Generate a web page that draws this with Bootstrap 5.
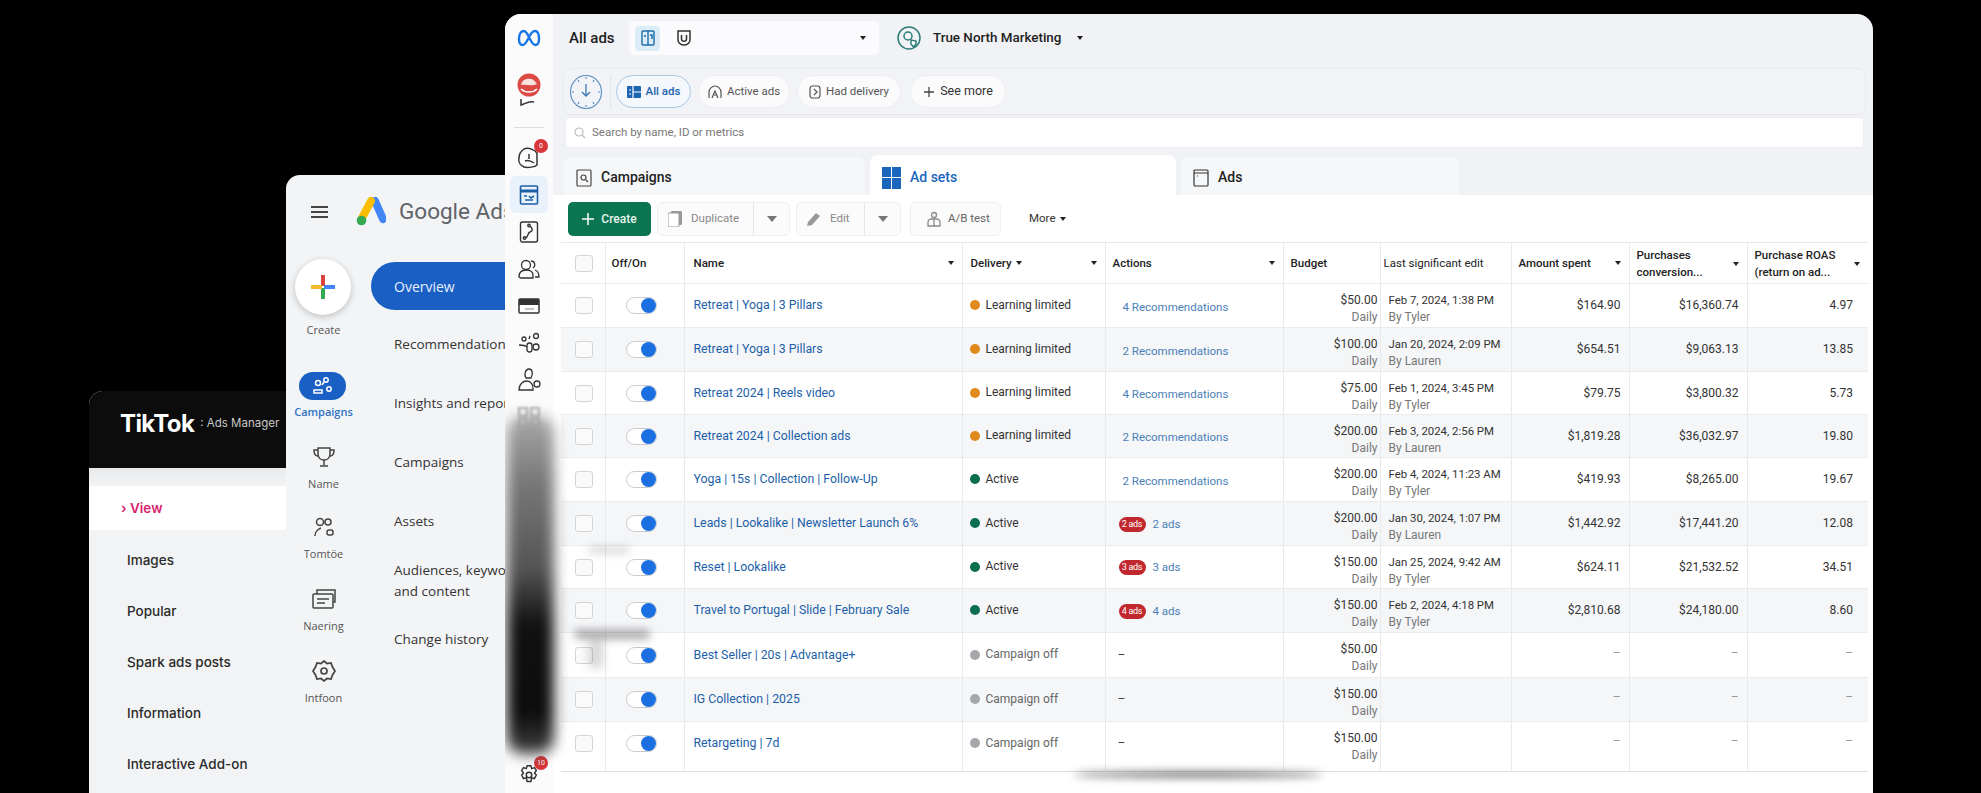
<!DOCTYPE html>
<html lang="en">
<head>
  <meta charset="UTF-8" />
  <title>All ads</title>
  <link href="https://cdn.jsdelivr.net/npm/bootstrap@5.3.0/dist/css/bootstrap.min.css" rel="stylesheet"/>
  <style>
    html, body { height: 100%; }
    body { background: #000; overflow: hidden; font-family: Roboto, "Liberation Sans", sans-serif; }
    .desk { position: relative; width: 1981px; height: 793px; overflow: hidden; }

    /* desktop windows */
    .win-tt, .win-gg, .win-mt { position: absolute; bottom: 0; overflow: hidden; }
    .win-tt { left: 89px; top: 391px; width: 300px; background: #f2f3f4; border-radius: 14px 0 0 0; font-family: Inter, sans-serif; }
    .win-gg { left: 286px; top: 175px; width: 320px; background: #f3f4f6; border-radius: 14px 0 0 0; font-family: "Open Sans", sans-serif; }
    .win-mt { left: 505px; top: 14px; width: 1368px; background: #f1f2f6; border-radius: 16px 16px 0 0; display: flex; }

    /* tiktok */
    .tt-head { height: 77px; background: #0c0c0c; color: #fff; padding: 0 31px 11px; }
    .tt-logo { font-size: 24px; font-weight: 700; letter-spacing: -.6px; }
    .tt-sub { font-size: 11.500px; color: #c9c9c9; margin-left: 6px; }
    .tt-nav { padding-top: 18px; background: linear-gradient(#e8e9ea, #f2f3f4 18px); }
    .tt-item { height: 51px; padding-left: 38px; font-size: 13.500px; font-weight: 500; color: #2a2a2a; }
    .tt-item.on { height: 44px; margin-bottom: 5px; background: #fff; color: #d81e6c; font-weight: 600; padding-left: 32px; }

    /* google */
    .gg-rail { width: 75px; }
    .gg-top { height: 73px; padding-left: 25px; gap: 20px; }
    .gg-bars { width: 17px; height: 12px; border-top: 2px solid #444; border-bottom: 2px solid #444; position: relative; }
    .gg-bars::after { content: ""; position: absolute; left: 0; right: 0; top: 3px; height: 2px; background: #444; }
    .gg-logo { margin-left: 8px; }
    .gg-name { font-size: 22.500px; color: #5f6368; white-space: nowrap; margin-left: -7px; font-family: Roboto, sans-serif; }
    .gg-plus { width: 56px; height: 56px; border-radius: 50%; background: #fff; box-shadow: 0 2px 7px rgba(0,0,0,.22); margin: 11px 0 0 9px; }
    .gg-lab { font-size: 11px; color: #555; text-align: center; width: 75px; line-height: 14px; white-space: nowrap; margin-top: 5px; }
    .gg-lab-create { margin-top: 8px; }
    .gg-lab-camp { color: #2f72c4; margin-top: 5px; font-weight: 600; }
    .gg-pill { width: 47px; height: 28px; border-radius: 14px; background: #1a5fc4; margin: 35px 0 0 13px; }
    .gg-ico { height: 30px; width: 75px; margin-top: 23px; }
    .gg-ico-tight { margin-top: 21px; }
    .gg-cols { position: relative; }
    .gg-over { margin-left: 10px; height: 48px; width: 260px; border-radius: 24px 0 0 24px; background: #1a5fc4; color: #e8f0fe; font-size: 14px; padding-left: 23px; margin-top: 14px; }
    .gg-link { margin: 38px 0 0 33px; font-size: 13.500px; color: #333; white-space: nowrap; line-height: 21px; font-weight: 500; }
    .gg-link-a { margin-top: 24px; }
    .gg-link-b { margin-top: 28px; }
    .gg-link-c { margin-top: 27px; }

    /* meta side */
    .mt-side { width: 48px; background: #fbfbfc; flex: none; }
    .mt-slot { height: 37px; flex: none; position: relative; }
    .mt-slot.on { background: #e9f1fa; border-radius: 6px; width: 38px; margin-left: 5px; }
    .mt-slot-logo { margin-top: 5px; }
    .mt-slot-user { margin-top: 14px; height: 45px; }
    .mt-slot-gear { margin-top: auto; }
    .mt-slot-dim svg { filter: blur(1px); }
    .mt-rule { width: 30px; height: 1px; background: #dcdcdc; margin: 12px auto 11px; }
    .mt-dot { position: absolute; top: 0; right: 5px; width: 14px; height: 14px; border-radius: 50%; background: #d9363a; color: #fff; font-size: 7px; line-height: 14px; text-align: center; }
    .mt-main { flex: 1; min-width: 0; padding-left: 8px; }

    .mt-top { height: 54px; padding: 0 0 6px 8px; }
    .mt-title { font-size: 15px; font-weight: 500; color: #1c1c1c; width: 60px; }
    .mt-pick { width: 250px; height: 34px; background: #fbfbfd; border-radius: 5px; padding: 0 13px 0 6px; }
    .mt-pick-a { width: 25px; height: 25px; background: #dcecf6; border-radius: 4px; }
    .mt-acct { margin-left: 18px; font-size: 13.400px; font-weight: 500; color: #222; }
    .caret-dn { width: 0; height: 0; border-left: 3.500px solid transparent; border-right: 3.500px solid transparent; border-top: 4.500px solid #222; flex: none; }
    .caret-gr { border-left-width: 5px; border-right-width: 5px; border-top: 6px solid #777; }

    .mt-strip { height: 47px; margin: 0 7px 0 2px; background: #f1f3f7; border: 1px solid #e8eaf0; border-radius: 8px; padding: 0 6px; gap: 7px; }
    .mt-clock { width: 32px; height: 34px; flex: none; }
    .mt-sep { width: 1px; height: 34px; background: #e2e4ea; margin: 0 -2px 0 1px; }
    .mt-chip { height: 33px; border-radius: 17px; background: #fbfbfc; border: 1px solid #eceef2; font-size: 11.500px; color: #555; gap: 5px; white-space: nowrap; justify-content: center; }
    .chip-all { width: 75px; border-color: #a9c8e4; color: #1c64b0; background: #f4f8fc; font-weight: 500; }
    .chip-act { width: 92px; }
    .chip-had { width: 104px; }
    .chip-more { width: 96px; font-size: 12.500px; color: #333; margin-left: 2px; }
    .mt-find { height: 31px; margin: 2px 9px 0 4px; background: #fff; border-radius: 5px; border: 1px solid #eceef1; padding-left: 8px; gap: 6px; font-size: 11.500px; color: #777; }
    .mt-tabs { height: 38px; margin: 9px 0 0 3px; gap: 5px; }
    .mt-tab { height: 38px; background: #f6f7f9; border-radius: 8px 8px 0 0; font-size: 14px; font-weight: 500; color: #222; padding: 3px 0 0 12px; gap: 9px; }
    .tab-camp { width: 301px; }
    .tab-sets { width: 306px; background: #fff; color: #1a66bd; height: 40px; margin-top: -2px; padding: 5px 0 0 12px; }
    .tab-ads { width: 278px; }

    .mt-body { background: #fff; margin-left: -8px; padding-left: 7px; position: relative; }
    .mt-tools { height: 47px; padding: 7px 0 6px 8px; gap: 6px; }
    .mt-btn { height: 34px; background: #fbfbfb; border: 1px solid #efefef; border-radius: 5px; font-size: 11.500px; color: #888; gap: 9px; white-space: nowrap; padding-left: 10px; }
    .mt-create { width: 83px; background: #0a7550; border: 0; color: #e6f4ee; font-size: 12px; font-weight: 500; justify-content: center; gap: 7px; padding: 0; }
    .btn-dup { width: 133px; }
    .btn-edit { width: 105px; }
    .btn-ab { width: 91px; color: #666; padding-left: 16px; gap: 7px; margin-left: 3px; }
    .tool-more { font-size: 11.500px; color: #333; margin-left: 22px; }
    .mt-split { border-left: 1px solid #e5e5e5; height: 100%; width: 36px; flex: none; }

    .ad-grid { table-layout: fixed; width: 1307px; margin: 0 0 0 1px; --bs-table-bg: transparent; border-top: 1px solid #e8e8ea; border-bottom: 1px solid #dedfe2; font-size: 12px; color: #333; }
    .ad-grid > :not(caption) > * > * { padding: 0; border-bottom: 1px solid #ebecee; border-right: 1px solid #e9eaec; vertical-align: middle; box-shadow: none; }
    .ad-grid > tbody > tr > td.cell-top { vertical-align: top; padding-top: 8px; }
    .ad-grid th { height: 41px; font-weight: 500; font-size: 11.500px; color: #222; line-height: 17px; background: #fff; }
    .ad-grid td { line-height: 17px; }
    .ad-grid tbody tr:last-child td { border-bottom: 0; padding-bottom: 6px; }
    .ad-grid tbody tr:nth-child(even) td { background: #f5f6f8; }
    .ad-grid tr > *:last-child { border-right: 0; }
    .col-a { width: 44px; } .col-b { width: 79px; } .col-c { width: 278px; } .col-d { width: 143px; } .col-e { width: 178px; }
    .col-f { width: 97px; } .col-g { width: 131px; } .col-h { width: 118px; } .col-i { width: 118px; } .col-j { width: 121px; }
    .hd { padding: 0 8px 0 7px; }
    .hd-off { padding-left: 6px; }
    .hd-name { padding-left: 9px; }
    .hd-del { padding-left: 8px; }
    .hd-edit { padding-left: 3px; white-space: nowrap; font-weight: 400; }
    .hd-two { padding-top: 2px; white-space: nowrap; }
    .box { width: 18px; height: 17px; border: 1px solid #d4d5d8; border-radius: 3px; background: #fafafa; margin-left: 14px; }
    .tog { width: 31px; height: 17px; border-radius: 9px; border: 1px solid #c9cace; background: #fff; margin-left: 20px; position: relative; }
    .tog::after { content: ""; position: absolute; right: 0; top: 0; width: 15px; height: 15px; border-radius: 50%; background: #1c6fe0; }
    .ad-name { padding-left: 9px; color: #1c5fa8; font-size: 12.300px; white-space: nowrap; }
    .st { padding-left: 7px; gap: 6px; white-space: nowrap; margin-top: -1px; }
    .st-dot { width: 10px; height: 10px; border-radius: 50%; flex: none; }
    .act { padding-left: 17px; color: #4a80b8; font-size: 11.500px; margin-top: 3px; white-space: nowrap; }
    .act-ads { padding-left: 13px; gap: 7px; color: #4a80b8; font-size: 11.500px; margin-top: 1px; }
    .ads-pill { width: 27px; height: 15px; border-radius: 8px; background: #c0282d; color: #fff; font-size: 9px; line-height: 15px; text-align: center; white-space: nowrap; letter-spacing: -.3px; }
    .act-none { padding-left: 12px; color: #444; }
    .sub { color: #777; font-size: 12px; }
    .bud { text-align: right; padding-right: 2px; }
    .edt { padding-left: 8px; white-space: nowrap; font-size: 11.400px; }
    .num { text-align: right; padding-right: 8px; }
    .num-last { padding-right: 15px; }
    .dash { color: #999; margin-top: -4px; }

    /* blur marks left on the picture */
    .smear { position: absolute; pointer-events: none; }
    .smear-side { left: 2px; top: 402px; width: 47px; height: 338px; filter: blur(7px); border-radius: 16px; background: linear-gradient(#a8a8a8, #777 20%, #555 45%, #111 62%, #0d0d0d 88%, #444); }
    .smear-a { left: 22px; top: 436px; width: 74px; height: 7px; background: rgba(0,0,0,.45); filter: blur(5px); }
    .smear-b { left: 36px; top: 445px; width: 14px; height: 28px; background: rgba(0,0,0,.16); filter: blur(5px); }
    .smear-d { left: 36px; top: 352px; width: 40px; height: 6px; background: rgba(0,0,0,.18); filter: blur(4px); }
    .smear-c { left: 520px; top: 577px; width: 250px; height: 5px; border-radius: 50%; background: rgba(0,0,0,.7); filter: blur(4px); }
  </style>
</head>
<body>
<div class="desk">

  <!-- tiktok window -->
  <div class="win-tt">
    <div class="tt-head d-flex align-items-center">
      <span class="tt-logo">TikTok</span><span class="tt-sub">: Ads Manager</span>
    </div>
    <div class="tt-nav">
      <div class="tt-item on d-flex align-items-center">&rsaquo;&nbsp;View</div>
      <div class="tt-item d-flex align-items-center">Images</div>
      <div class="tt-item d-flex align-items-center">Popular</div>
      <div class="tt-item d-flex align-items-center">Spark ads posts</div>
      <div class="tt-item d-flex align-items-center">Information</div>
      <div class="tt-item d-flex align-items-center">Interactive Add-on</div>
    </div>
  </div>

  <!-- google ads window -->
  <div class="win-gg">
    <div class="gg-top d-flex align-items-center">
      <div class="gg-bars"></div>
      <svg class="gg-logo" width="30" height="30" viewBox="0 0 30 30"><path d="M19 4 L27 22" stroke="#4285f4" stroke-width="8" stroke-linecap="round"/><path d="M15 4 L5 23" stroke="#fbbc04" stroke-width="8" stroke-linecap="round"/><circle cx="5.5" cy="23.500" r="4.800" fill="#34a853"/></svg>
      <span class="gg-name">Google Ads</span>
    </div>
    <div class="d-flex">
      <div class="gg-rail">
        <div class="gg-plus d-flex align-items-center justify-content-center">
          <svg width="26" height="26" viewBox="0 0 26 26"><path d="M13 1v11" stroke="#d8443a" stroke-width="4"/><path d="M13 14v11" stroke="#34a853" stroke-width="4"/><path d="M1 13h11" stroke="#f5b92e" stroke-width="4"/><path d="M14 13h11" stroke="#4285f4" stroke-width="4"/></svg>
        </div>
        <div class="gg-lab gg-lab-create">Create</div>
        <div class="gg-pill d-flex align-items-center justify-content-center">
          <svg width="22" height="18" viewBox="0 0 22 18" fill="none" stroke="#fff" stroke-width="1.500"><circle cx="6" cy="6" r="2.500"/><circle cx="14" cy="3" r="2.200"/><circle cx="17" cy="12" r="2.200"/><path d="M2 16v-3h8v3z"/><path d="M10 8l2-3"/></svg>
        </div>
        <div class="gg-lab gg-lab-camp">Campaigns</div>
        <div class="gg-ico d-flex align-items-center justify-content-center">
          <svg width="24" height="24" viewBox="0 0 24 24" fill="none" stroke="#444" stroke-width="1.500"><path d="M6 3h12v6c0 4-3 6-6 6s-6-2-6-6z"/><path d="M6 5H2c0 4 2 6 4 6M18 5h4c0 4-2 6-4 6M12 15v5M8 21h8"/></svg>
        </div>
        <div class="gg-lab">Name</div>
        <div class="gg-ico gg-ico-tight d-flex align-items-center justify-content-center">
          <svg width="24" height="24" viewBox="0 0 24 24" fill="none" stroke="#444" stroke-width="1.500"><circle cx="8" cy="7" r="3.500"/><circle cx="16" cy="7" r="3"/><rect x="15" y="15" width="6" height="5" rx="2"/><path d="M3 21c0-4 3-7 6-8"/></svg>
        </div>
        <div class="gg-lab">Tomtöe</div>
        <div class="gg-ico d-flex align-items-center justify-content-center">
          <svg width="26" height="24" viewBox="0 0 26 24" fill="none" stroke="#444" stroke-width="1.500"><rect x="2" y="7" width="20" height="14" rx="1"/><path d="M6 7V3h18v12h-2M6 12h12M6 16h8"/></svg>
        </div>
        <div class="gg-lab">Naering</div>
        <div class="gg-ico d-flex align-items-center justify-content-center">
          <svg width="24" height="24" viewBox="0 0 24 24" fill="none" stroke="#444" stroke-width="1.700"><path d="M12 2l3 2.500 4-.5 1.500 4L23 12l-2.500 4-1.500 4-4-.5L12 22l-3-2.500-4 .5-1.500-4L1 12l2.500-4L5 4l4 .5z"/><circle cx="12" cy="12" r="3"/></svg>
        </div>
        <div class="gg-lab">Intfoon</div>
      </div>
      <div class="gg-cols flex-grow-1">
        <div class="gg-over d-flex align-items-center">Overview</div>
        <div class="gg-link gg-link-a">Recommendations</div>
        <div class="gg-link">Insights and reports</div>
        <div class="gg-link">Campaigns</div>
        <div class="gg-link">Assets</div>
        <div class="gg-link gg-link-b">Audiences, keywords<br>and content</div>
        <div class="gg-link gg-link-c">Change history</div>
      </div>
    </div>
  </div>

  <!-- meta ads manager window -->
  <div class="win-mt">
    <div class="mt-side d-flex flex-column align-items-stretch">
      <div class="mt-slot mt-slot-logo d-flex justify-content-center align-items-center">
        <svg width="24" height="18" viewBox="0 0 24 18" fill="none" stroke="#1877e8" stroke-width="2.400"><path d="M7 2C3.500 2 2 6 2 10c0 3 1 6 3.500 6 3 0 5-5 6.500-8 2-4 3.500-6 6-6 3 0 4 4 4 8 0 3-1 6-3.500 6-3 0-5-5-6.500-8-1.500-3-3-6-5-6z"/></svg>
      </div>
      <div class="mt-slot mt-slot-user d-flex justify-content-center">
        <svg width="24" height="40" viewBox="0 0 24 40"><circle cx="12" cy="15" r="11.500" fill="#dd4a45"/><path d="M4 15c1-5 5-7 10-6 2 0 4 2 6 5l-3 1c-4 1-9-1-13 0z" fill="#f8e3df"/><path d="M4 19c4 4 12 4 16 0" stroke="#fff" stroke-width="1.500" fill="none"/><path d="M4 29v6c4-1 7-4 13-3" stroke="#333" stroke-width="1.500" fill="none"/></svg>
      </div>
      <div class="mt-rule"></div>
      <div class="mt-slot d-flex justify-content-center align-items-center">
        <svg width="24" height="24" viewBox="0 0 24 24" fill="none" stroke="#333" stroke-width="1.500"><path d="M7 3c5-2 11 1 13 4v12c-2 2-9 3-13 2-4-2-6-4-5-9 0-4 2-7 5-9z"/><path d="M12 8v5M8 15c3-1 6 0 9 2"/></svg>
        <span class="mt-dot">0</span>
      </div>
      <div class="mt-slot on d-flex justify-content-center align-items-center">
        <svg width="20" height="22" viewBox="0 0 20 22" fill="none" stroke="#1d5fa6" stroke-width="1.600"><rect x="1.500" y="2" width="17" height="18" rx="1"/><path d="M1.500 7h17" stroke-width="3"/><path d="M5 12h3M10 12l2 2 3-2M6 16h8"/></svg>
      </div>
      <div class="mt-slot d-flex justify-content-center align-items-center">
        <svg width="20" height="24" viewBox="0 0 20 24" fill="none" stroke="#333" stroke-width="1.400"><rect x="1.500" y="2" width="17" height="20" rx="2"/><path d="M6 18c4-1 2-5 5-6s3-3 0-6"/><circle cx="5.500" cy="18" r="1.200"/><circle cx="10" cy="5.500" r="1.200"/></svg>
      </div>
      <div class="mt-slot d-flex justify-content-center align-items-center">
        <svg width="24" height="22" viewBox="0 0 24 22" fill="none" stroke="#333" stroke-width="1.300"><circle cx="9" cy="7" r="4.500"/><path d="M2 19c0-5 3-7 7-7s7 2 7 5v3H4z"/><path d="M14 3c4 0 5 5 2 7M18 12c3 1 4 3 4 7h-4"/></svg>
      </div>
      <div class="mt-slot d-flex justify-content-center align-items-center">
        <svg width="22" height="18" viewBox="0 0 22 18"><rect x="1" y="2" width="20" height="14" rx="1" fill="#fff" stroke="#333" stroke-width="1.500"/><rect x="1" y="2" width="20" height="6" fill="#333"/><path d="M7 12h9" stroke="#888"/></svg>
      </div>
      <div class="mt-slot d-flex justify-content-center align-items-center">
        <svg width="24" height="22" viewBox="0 0 24 22" fill="none" stroke="#333" stroke-width="1.300"><circle cx="7" cy="7" r="2"/><circle cx="19" cy="4" r="2.500"/><circle cx="19" cy="15" r="3"/><rect x="10" y="11" width="5" height="9" rx="2.500"/><path d="M2 13c3 0 6 0 8 2M12 7l1-3"/></svg>
      </div>
      <div class="mt-slot d-flex justify-content-center align-items-center">
        <svg width="24" height="26" viewBox="0 0 24 26" fill="none" stroke="#333" stroke-width="1.300"><path d="M9 11c-2-3-1-9 3-9s4 6 2 9z"/><path d="M2 23c0-6 4-9 8-9s6 4 6 7v2z"/><circle cx="20" cy="17" r="3"/></svg>
      </div>
      <div class="mt-slot mt-slot-dim d-flex justify-content-center align-items-center">
        <svg width="24" height="22" viewBox="0 0 24 22" fill="none" stroke="#999" stroke-width="1.500"><rect x="2" y="2" width="8" height="8"/><rect x="14" y="2" width="8" height="8"/><rect x="2" y="13" width="8" height="8"/><rect x="14" y="13" width="8" height="8"/></svg>
      </div>
      <div class="mt-slot mt-slot-gear d-flex justify-content-center align-items-center">
        <svg width="22" height="22" viewBox="0 0 24 24" fill="none" stroke="#333" stroke-width="1.600"><path d="M10 2h4l1 3 3-1 2 3-2 3 2 2-2 4-3-1-1 4h-4l-1-4-3 1-2-4 2-2-2-3 2-3 3 1z"/><circle cx="12" cy="12" r="3"/></svg>
        <span class="mt-dot">10</span>
      </div>
    </div>

    <div class="mt-main d-flex flex-column">
      <div class="mt-top d-flex align-items-center">
        <span class="mt-title">All ads</span>
        <div class="mt-pick d-flex align-items-center">
          <span class="mt-pick-a d-flex align-items-center justify-content-center">
            <svg width="14" height="16" viewBox="0 0 14 16" fill="none" stroke="#1b6ea8" stroke-width="1.400"><rect x="1" y="1" width="12" height="14" rx="1"/><path d="M7 1v14M3 6h2M9 5h2v4"/></svg>
          </span>
          <svg class="ms-3" width="16" height="16" viewBox="0 0 14 16" fill="none" stroke="#333" stroke-width="1.500"><path d="M1 1h12v9c0 3-3 5-6 5s-6-2-6-5z"/><path d="M4.500 5v4c0 3 5 3 5 0V5"/></svg>
          <span class="caret-dn ms-auto"></span>
        </div>
        <div class="mt-acct d-flex align-items-center">
          <svg width="24" height="26" viewBox="0 0 24 26" fill="none" stroke="#2e7d77" stroke-width="1.500"><circle cx="12" cy="13" r="11"/><circle cx="11" cy="11" r="4"/><path d="M14 15l5 1v3l-2.500 3-2.500-3z" fill="#fff"/></svg>
          <span class="ms-2 ps-1">True North Marketing</span>
          <span class="caret-dn ms-3"></span>
        </div>
      </div>

      <div class="mt-strip d-flex align-items-center">
        <svg class="mt-clock" viewBox="0 0 32 34" fill="none" stroke="#5f93c4" stroke-width="1.200"><ellipse cx="16" cy="17" rx="15.500" ry="16.500"/><path d="M16 9v12M12 17l4 4 4-4" stroke-width="1.300" stroke="#3a78b6"/><path d="M16 2v2M16 30v2M2 17h2M28 17h2M8 5l1 2M24 5l-1 2M8 29l1-2M24 29l-1-2"/></svg>
        <span class="mt-sep"></span>
        <span class="mt-chip chip-all d-flex align-items-center">
          <svg width="14" height="14" viewBox="0 0 14 14"><rect x="0" y="1" width="14" height="12" rx="1" fill="#1c64b0"/><path d="M6 1v12M6 7h8M2 5h2M2 9h2" stroke="#fff" stroke-width="1.200"/></svg>All ads</span>
        <span class="mt-chip chip-act d-flex align-items-center">
          <svg width="14" height="14" viewBox="0 0 14 14" fill="none" stroke="#555" stroke-width="1.200"><path d="M1 13V7c0-3 3-6 6-6s6 3 6 6v6"/><path d="M4 13l3-7 3 7M5 10h4"/></svg>Active ads</span>
        <span class="mt-chip chip-had d-flex align-items-center">
          <svg width="12" height="14" viewBox="0 0 12 14" fill="none" stroke="#555" stroke-width="1.200"><rect x="1" y="1" width="10" height="12" rx="2.500"/><path d="M5 4l3 3-3 3"/></svg>Had delivery</span>
        <span class="mt-chip chip-more d-flex align-items-center">
          <svg width="12" height="12" viewBox="0 0 12 12" stroke="#444" stroke-width="1.300"><path d="M6 1v10M1 6h10"/></svg>See more</span>
      </div>

      <div class="mt-find d-flex align-items-center">
        <svg width="12" height="12" viewBox="0 0 12 12" fill="none" stroke="#bbb" stroke-width="1.200"><circle cx="5" cy="5" r="4"/><path d="M8 8l3 3"/></svg>
        Search by name, ID or metrics
      </div>

      <div class="mt-tabs d-flex">
        <div class="mt-tab tab-camp d-flex align-items-center">
          <svg width="16" height="18" viewBox="0 0 16 18" fill="none" stroke="#444" stroke-width="1.200"><rect x="1" y="1" width="14" height="16" rx="1"/><circle cx="7.500" cy="8.500" r="2.500"/><path d="M10 11l2 2"/></svg>Campaigns</div>
        <div class="mt-tab tab-sets d-flex align-items-center">
          <svg width="19" height="22" viewBox="0 0 19 22" fill="#1a66bd"><rect width="9" height="10"/><rect x="10" width="9" height="10"/><rect y="11" width="9" height="11"/><rect x="10" y="11" width="9" height="11"/></svg>Ad sets</div>
        <div class="mt-tab tab-ads d-flex align-items-center">
          <svg width="16" height="18" viewBox="0 0 16 18" fill="none" stroke="#333" stroke-width="1.200"><rect x="1" y="1" width="14" height="16" rx="1"/><path d="M1 4h14M4 7h1"/></svg>Ads</div>
      </div>

      <div class="mt-body flex-grow-1">
        <div class="mt-tools d-flex align-items-center">
          <span class="mt-btn mt-create d-flex align-items-center">
            <svg width="12" height="12" viewBox="0 0 12 12" stroke="#fff" stroke-width="1.500"><path d="M6 0v12M0 6h12"/></svg>Create</span>
          <span class="mt-btn btn-dup d-flex align-items-center">
            <svg width="14" height="16" viewBox="0 0 14 16" fill="#999"><rect x="3" y="0" width="11" height="14" rx="1"/><rect x="0" y="2" width="11" height="14" rx="1" fill="#fff" stroke="#999"/></svg>Duplicate
            <span class="mt-split d-flex align-items-center justify-content-center ms-auto"><span class="caret-dn caret-gr"></span></span></span>
          <span class="mt-btn btn-edit d-flex align-items-center">
            <svg width="14" height="14" viewBox="0 0 14 14" fill="#999"><path d="M0 14l1-4 8-9 4 3-8 9z"/></svg>Edit
            <span class="mt-split d-flex align-items-center justify-content-center ms-auto"><span class="caret-dn caret-gr"></span></span></span>
          <span class="mt-btn btn-ab d-flex align-items-center">
            <svg width="14" height="16" viewBox="0 0 14 16" fill="none" stroke="#888" stroke-width="1.300"><circle cx="7" cy="4" r="2.500"/><path d="M1 15v-4c0-2 2-3 3-3h6c1 0 3 1 3 3v4zM7 8v7"/></svg>A/B test</span>
          <span class="tool-more d-flex align-items-center gap-1">More <span class="caret-dn"></span></span>
        </div>

        <table class="table ad-grid mb-0">
          <colgroup>
            <col class="col-a"><col class="col-b"><col class="col-c"><col class="col-d"><col class="col-e">
            <col class="col-f"><col class="col-g"><col class="col-h"><col class="col-i"><col class="col-j">
          </colgroup>
          <thead>
            <tr>
              <th><div class="box"></div></th>
              <th><div class="hd hd-off">Off/On</div></th>
              <th><div class="hd hd-name d-flex align-items-center justify-content-between">Name <span class="caret-dn"></span></div></th>
              <th><div class="hd hd-del d-flex align-items-center">Delivery<span class="caret-dn ms-1"></span><span class="caret-dn ms-auto"></span></div></th>
              <th><div class="hd d-flex align-items-center justify-content-between">Actions <span class="caret-dn"></span></div></th>
              <th><div class="hd">Budget</div></th>
              <th><div class="hd hd-edit">Last significant edit</div></th>
              <th><div class="hd d-flex align-items-center justify-content-between">Amount spent <span class="caret-dn"></span></div></th>
              <th><div class="hd hd-two d-flex align-items-center justify-content-between"><span>Purchases<br>conversion...</span><span class="caret-dn"></span></div></th>
              <th><div class="hd hd-two d-flex align-items-center justify-content-between"><span>Purchase ROAS<br>(return on ad...</span><span class="caret-dn"></span></div></th>
            </tr>
          </thead>
          <tbody id="linhas"></tbody>
        </table>

        <div class="smear smear-a"></div>
        <div class="smear smear-b"></div>
        <div class="smear smear-d"></div>
        <div class="smear smear-c"></div>
      </div>
    </div>
    <div class="smear smear-side"></div>
  </div>
</div>

<script src="https://cdn.jsdelivr.net/npm/bootstrap@5.3.0/dist/js/bootstrap.bundle.min.js"></script>
<script>
  const linhas = [
    ["Retreat | Yoga | 3 Pillars", "L", "4 Recommendations", "$50.00", "Feb 7, 2024, 1:38 PM", "Tyler", "$164.90", "$16,360.74", "4.97", 44],
    ["Retreat | Yoga | 3 Pillars", "L", "2 Recommendations", "$100.00", "Jan 20, 2024, 2:09 PM", "Lauren", "$654.51", "$9,063.13", "13.85", 44],
    ["Retreat 2024 | Reels video", "L", "4 Recommendations", "$75.00", "Feb 1, 2024, 3:45 PM", "Tyler", "$79.75", "$3,800.32", "5.73", 43],
    ["Retreat 2024 | Collection ads", "L", "2 Recommendations", "$200.00", "Feb 3, 2024, 2:56 PM", "Lauren", "$1,819.28", "$36,032.97", "19.80", 43],
    ["Yoga | 15s | Collection | Follow-Up", "A", "2 Recommendations", "$200.00", "Feb 4, 2024, 11:23 AM", "Tyler", "$419.93", "$8,265.00", "19.67", 44],
    ["Leads | Lookalike | Newsletter Launch 6%", "A", "2 ads", "$200.00", "Jan 30, 2024, 1:07 PM", "Lauren", "$1,442.92", "$17,441.20", "12.08", 44],
    ["Reset | Lookalike", "A", "3 ads", "$150.00", "Jan 25, 2024, 9:42 AM", "Tyler", "$624.11", "$21,532.52", "34.51", 43],
    ["Travel to Portugal | Slide | February Sale", "A", "4 ads", "$150.00", "Feb 2, 2024, 4:18 PM", "Tyler", "$2,810.68", "$24,180.00", "8.60", 44],
    ["Best Seller | 20s | Advantage+", "O", "", "$50.00", "", "", "", "", "", 45],
    ["IG Collection | 2025", "O", "", "$150.00", "", "", "", "", "", 44],
    ["Retargeting | 7d", "O", "", "$150.00", "", "", "", "", "", 50]
  ];
  const estados = {
    L: ["Learning limited", "#e08a1e", "#333"],
    A: ["Active", "#0a6e4f", "#333"],
    O: ["Campaign off", "#a5a7aa", "#666"]
  };
  const corpo = document.getElementById("linhas");
  linhas.forEach(l => {
    const e = estados[l[1]];
    let acao = '<div class="act-none">–</div>';
    if (l[2].endsWith("ads")) acao = `<div class="act-ads d-flex align-items-center"><span class="ads-pill">${l[2]}</span>${l[2]}</div>`;
    else if (l[2]) acao = `<div class="act">${l[2]}</div>`;
    const edit = l[4] ? `<div class="edt">${l[4]}<br><span class="sub">By ${l[5]}</span></div>` : "";
    const num = (v, c) => v ? `<div class="num ${c}">${v}</div>` : `<div class="num dash ${c}">–</div>`;
    const tr = document.createElement("tr");
    tr.style.height = l[9] + "px";
    tr.innerHTML = `<td><div class="box"></div></td>
      <td><div class="tog"></div></td>
      <td><div class="ad-name">${l[0]}</div></td>
      <td><div class="st d-flex align-items-center" style="color:${e[2]}"><span class="st-dot" style="background:${e[1]}"></span>${e[0]}</div></td>
      <td>${acao}</td>
      <td class="cell-top"><div class="bud">${l[3]}<br><span class="sub">Daily</span></div></td>
      <td class="cell-top">${edit}</td>
      <td>${num(l[6], "")}</td><td>${num(l[7], "")}</td><td>${num(l[8], "num-last")}</td>`;
    corpo.appendChild(tr);
  });
</script>
</body>
</html>
